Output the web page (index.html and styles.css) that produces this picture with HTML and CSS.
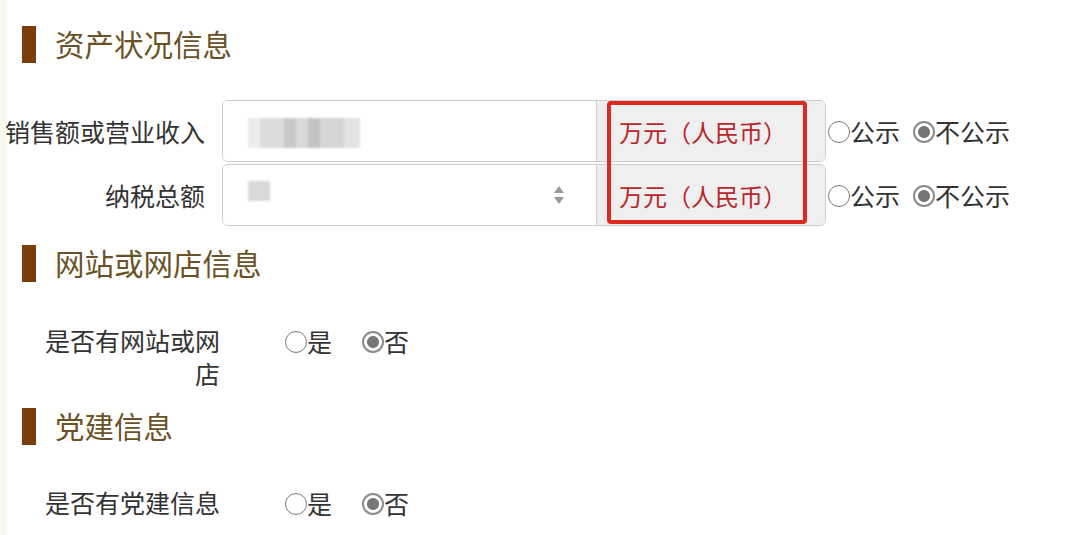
FILE: index.html
```html
<!DOCTYPE html>
<html lang="zh-CN">
<head>
<meta charset="utf-8">
<title>资产状况信息</title>
<link rel="stylesheet" href="styles.css">
</head>
<body>
<div class="page">
  <h2 class="sec sec-first"><span class="bar"></span><span class="sec-title">资产状况信息</span></h2>

  <div class="fields">
    <div class="row">
      <div class="lbl">销售额或营业收入</div>
      <div class="group">
        <div class="inp"><span class="mask mask-long"></span></div>
        <div class="addon">万元（人民币）</div>
      </div>
      <div class="opts">
        <span class="opt"><span class="radio"></span><span class="opt-text">公示</span></span>
        <span class="opt"><span class="radio on"></span><span class="opt-text">不公示</span></span>
      </div>
    </div>
    <div class="row">
      <div class="lbl">纳税总额</div>
      <div class="group">
        <div class="inp"><span class="mask mask-short"></span>
          <svg class="spin" width="12" height="22" viewBox="0 0 12 22"><path d="M6 2 L11 9 H1 Z" fill="#9a9a9a"/><path d="M6 20 L11 13 H1 Z" fill="#9a9a9a"/></svg>
        </div>
        <div class="addon">万元（人民币）</div>
      </div>
      <div class="opts">
        <span class="opt"><span class="radio"></span><span class="opt-text">公示</span></span>
        <span class="opt"><span class="radio on"></span><span class="opt-text">不公示</span></span>
      </div>
    </div>
    <div class="mark"></div>
  </div>

  <h2 class="sec sec-second"><span class="bar"></span><span class="sec-title">网站或网店信息</span></h2>
  <div class="qrow qrow-site">
    <div class="qlbl">是否有网站或网店</div>
    <div class="qopts">
      <span class="opt"><span class="radio"></span><span class="opt-text">是</span></span>
      <span class="opt"><span class="radio on"></span><span class="opt-text">否</span></span>
    </div>
  </div>

  <h2 class="sec sec-third"><span class="bar"></span><span class="sec-title">党建信息</span></h2>
  <div class="qrow qrow-party">
    <div class="qlbl">是否有党建信息</div>
    <div class="qopts">
      <span class="opt"><span class="radio"></span><span class="opt-text">是</span></span>
      <span class="opt"><span class="radio on"></span><span class="opt-text">否</span></span>
    </div>
  </div>
</div>
</body>
</html>
```

FILE: styles.css
```css
html, body {
  margin: 0;
  padding: 0;
}
body {
  width: 1080px;
  height: 535px;
  overflow: hidden;
  background: linear-gradient(to right, #f9f8ec 0, #f9f8ec 6px, #ffffff 8px);
  font-family: "Noto Sans CJK SC", "Noto Sans", sans-serif;
  color: #333333;
}
.page {
  padding-top: 26px;
}
.sec {
  display: flex;
  align-items: center;
  margin: 0 0 0 22px;
  height: 37px;
  font-size: 29.5px;
  font-weight: 400;
  color: #6b5226;
  line-height: 37px;
}
.bar {
  width: 14px;
  height: 37px;
  background: #7a3e0c;
  margin-right: 19px;
  flex: none;
}
.sec-title {
  position: relative;
  top: -1px;
}
.sec-first { margin-bottom: 37px; }
.sec-second { margin-top: 19px; margin-bottom: 42px; }
.sec-third { margin-top: 18px; margin-bottom: 41px; }

.fields {
  position: relative;
  display: flex;
  flex-direction: column;
  gap: 2px;
}
.row {
  display: flex;
  align-items: center;
  height: 62px;
}
.lbl {
  width: 205px;
  text-align: right;
  font-size: 25px;
  line-height: 30px;
  margin-right: 17px;
  flex: none;
}
.group {
  display: flex;
  width: 604px;
  height: 62px;
  box-sizing: border-box;
  border: 1.5px solid #cdcdcd;
  border-radius: 6px;
  overflow: hidden;
  flex: none;
}
.inp {
  position: relative;
  width: 373px;
  background: #ffffff;
  display: flex;
  align-items: center;
  padding-left: 25px;
  box-sizing: border-box;
}
.mask {
  display: block;
  filter: blur(1px);
}
.mask-long {
  width: 112px;
  height: 30px;
  background:
    linear-gradient(to right, #ececec 0 12px, #dcdcdc 12px 36px, #c9c9c9 36px 48px, #d8d8d8 48px 60px, #c4c4c4 60px 72px, #d6d6d6 72px 96px, #e2e2e2 96px 112px);
  margin-top: 4px;
}
.mask-short {
  width: 22px;
  height: 20px;
  background: #d9d9d9;
  margin-top: -8px;
}
.spin {
  position: absolute;
  right: 31px;
  top: 19px;
}
.addon {
  flex: 1;
  background: #efefef;
  border-left: 1.5px solid #cdcdcd;
  display: flex;
  align-items: center;
  padding-left: 22px;
  font-size: 24px;
  color: #b9262c;
}
.opts {
  display: flex;
  align-items: center;
  margin-left: 2px;
}
.opt {
  display: inline-flex;
  align-items: center;
  font-size: 25px;
  line-height: 30px;
  color: #333333;
}
.opts .opt + .opt { margin-left: 13px; }
.radio {
  width: 22px;
  height: 22px;
  box-sizing: border-box;
  border: 1.5px solid #7a7a7a;
  border-radius: 50%;
  background: #ffffff;
  flex: none;
  position: relative;
  top: 1px;
}
.radio.on {
  border: 2px solid #8a8a8a;
  background: radial-gradient(circle, #777777 0, #777777 5.5px, #ffffff 6.5px);
}
.mark {
  position: absolute;
  left: 607px;
  top: 1px;
  width: 200px;
  height: 123px;
  box-sizing: border-box;
  border: 4px solid #dc2a20;
  border-radius: 4px;
}

.qrow {
  display: flex;
  align-items: flex-start;
}
.qlbl {
  width: 180px;
  margin-left: 40px;
  text-align: right;
  font-size: 25px;
  line-height: 33px;
  flex: none;
}
.qopts {
  display: flex;
  align-items: center;
  height: 33px;
  margin-left: 65px;
}
.qopts .opt + .opt { margin-left: 30px; }
```
